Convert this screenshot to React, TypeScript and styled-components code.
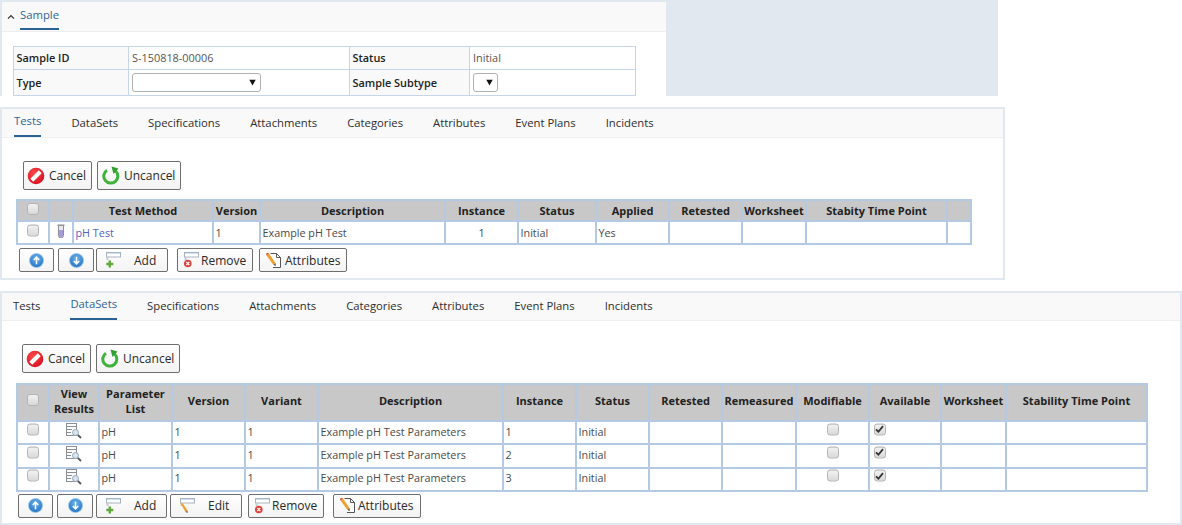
import React from "react";
import styled, { createGlobalStyle } from "styled-components";

const Global = createGlobalStyle`
  html, body { margin: 0; padding: 0; background: #fff; }
  body { font-family: "Open Sans", "Liberation Sans", sans-serif; font-size: 11px; color: #444; }
  * { box-sizing: border-box; }
`;

const Page = styled.div`
  width: 1182px;
  height: 525px;
  overflow: hidden;
  display: flex;
  flex-direction: column;
`;

const TopBand = styled.div`
  width: 998px;
  height: 96px;
  background: #e2e8f0;
  padding: 2px 0 0 2px;
  flex: none;
`;

const SamplePanel = styled.section`
  width: 664px;
  height: 94px;
  background: #fff;
  overflow: hidden;
`;

const TabBar = styled.div<{ $h: number; $pad: number }>`
  height: ${(p) => p.$h}px;
  padding-left: ${(p) => p.$pad}px;
  background: #f9f9f9;
  border-bottom: 1px solid #eeeeee;
  display: flex;
  gap: 30px;
`;

const Tab = styled.div<{ $active?: boolean; $top: number }>`
  height: 100%;
  padding-top: ${(p) => (p.$active ? p.$top - 2 : p.$top)}px;
  line-height: 15px;
  font-size: 11.3px;
  white-space: nowrap;
  color: ${(p) => (p.$active ? "#2f6496" : "#2e2e2e")};
  border-bottom: ${(p) => (p.$active ? "2px solid #2a6294" : "none")};
`;

const SampleHead = styled.div`
  display: flex;
  align-items: flex-start;
  height: 30px;
  gap: 5px;
  padding-left: 5px;
  background: #f9f9f9;
  border-bottom: 1px solid #eeeeee;
`;

const Chevron = styled.svg`
  width: 8px;
  height: 6px;
  margin-top: 12px;
  flex: none;
`;

const SampleTab = styled.div`
  height: 28px;
  padding-top: 5px;
  line-height: 15px;
  color: #2f6496;
  font-size: 11.3px;
  border-bottom: 2px solid #2a6294;
`;

const FormTable = styled.table`
  border-collapse: collapse;
  table-layout: fixed;
  width: 622px;
  margin: 13.5px 0 0 10.5px;
`;

const FormRow = styled.tr<{ $h: number }>`
  height: ${(p) => p.$h}px;
`;

const FormLabel = styled.td`
  border: 1px solid #c6d6e8;
  background: #f9f9f9;
  padding: 0 3px;
  font-weight: 600;
  color: #222;
  font-size: 10.9px;
`;

const FormValue = styled.td`
  border: 1px solid #c6d6e8;
  padding: 0 3px 0 3.5px;
  color: #555;
  font-size: 10.9px;
`;

const FakeSelect = styled.div<{ $w: number }>`
  width: ${(p) => p.$w}px;
  height: 19px;
  margin-left: -0.5px;
  border: 1px solid #b0b0b0;
  border-radius: 3px;
  background: #fff;
  display: flex;
  align-items: center;
  justify-content: flex-end;
  padding-right: 4px;
`;

const Spacer = styled.div<{ $h: number }>`
  height: ${(p) => p.$h}px;
  flex: none;
`;

const Panel = styled.section<{ $w: number; $h: number }>`
  width: ${(p) => p.$w}px;
  height: ${(p) => p.$h}px;
  border: 2px solid #e2e8f0;
  flex: none;
  overflow: hidden;
`;

const TopButtons = styled.div<{ $left: number; $top: number }>`
  display: flex;
  gap: 5px;
  padding: ${(p) => p.$top}px 0 0 ${(p) => p.$left}px;
`;

const Btn = styled.div<{ $w: number; $gap?: number; $left?: number; $mr?: number; $center?: boolean }>`
  width: ${(p) => p.$w}px;
  height: 24px;
  margin-right: ${(p) => p.$mr ?? 0}px;
  flex: none;
  border: 1px solid #6e6e6e;
  border-radius: 2px;
  background: linear-gradient(#ffffff, #f3f3f3);
  display: flex;
  align-items: center;
  justify-content: ${(p) => (p.$center ? "center" : "flex-start")};
  gap: ${(p) => p.$gap ?? 3}px;
  padding-left: ${(p) => (p.$center ? 0 : p.$left ?? 3)}px;
  font-size: 12px;
  color: #2a2a2a;
  white-space: nowrap;
`;

const BigBtn = styled(Btn)`
  height: 29px;
`;

const GridTable = styled.table<{ $w: number; $left: number; $top: number }>`
  border-collapse: collapse;
  table-layout: fixed;
  width: ${(p) => p.$w}px;
  margin: ${(p) => p.$top}px 0 0 ${(p) => p.$left}px;
`;

const Col = styled.col<{ $w: number }>`
  width: ${(p) => p.$w}px;
`;

const HeadRow = styled.tr<{ $h: number }>`
  height: ${(p) => p.$h}px;
`;

const Row = styled.tr<{ $h: number }>`
  height: ${(p) => p.$h}px;
`;

const Th = styled.th<{ $lift?: number }>`
  border: 2px solid #b3c9e4;
  background: #c8c8c8;
  color: #222;
  font-size: 11px;
  line-height: 15px;
  font-weight: 700;
  padding: 0 0 ${(p) => p.$lift ?? 0}px;
  text-align: center;
`;

const Td = styled.td<{ $align?: string; $link?: boolean; $pad?: number; $lift?: number }>`
  border: 2px solid #b3c9e4;
  background: #fff;
  padding: 0 1px ${(p) => p.$lift ?? 0}px ${(p) => p.$pad ?? 1.5}px;
  font-size: 10.8px;
  line-height: 14px;
  text-align: ${(p) => p.$align ?? "left"};
  color: ${(p) => (p.$link ? "#5a5fc4" : "#4a4a4a")};
  white-space: nowrap;
  overflow: hidden;
`;

const CheckBox = styled.span<{ $raise: number }>`
  display: flex;
  align-items: center;
  justify-content: center;
  width: 12px;
  height: 12px;
  margin: 0 auto;
  transform: translateY(-${(p) => p.$raise}px);
  border: 1px solid #b4b4b4;
  border-radius: 3px;
  background: linear-gradient(#f2f2f2, #d8d8d8);
`;

const LeftCheck = styled(CheckBox)`
  margin: 0;
`;

const BottomButtons = styled.div<{ $left: number; $top: number }>`
  display: flex;
  gap: 4px;
  padding: ${(p) => p.$top}px 0 0 ${(p) => p.$left}px;
`;

const CellIcon = styled.svg`
  display: block;
  margin: 0 auto;
  transform: translateY(-2px);
`;

const BtnIcon = styled.svg`
  flex: none;
  display: block;
`;

const CancelIcon = () => (
  <BtnIcon width="18" height="18" viewBox="0 0 18 18">
    <defs>
      <radialGradient id="rg" cx="40%" cy="35%" r="75%">
        <stop offset="0" stopColor="#ff4a4a" />
        <stop offset="1" stopColor="#d20c1c" />
      </radialGradient>
    </defs>
    <circle cx="9" cy="9" r="8.3" fill="url(#rg)" />
    <rect x="3" y="7" width="12" height="4" fill="#fff" transform="rotate(-45 9 9)" />
  </BtnIcon>
);

const UncancelIcon = () => (
  <BtnIcon width="18" height="19" viewBox="0 0 18 19">
    <path d="M5 4.2 A7 7 0 1 0 13.6 5" fill="none" stroke="#3fb23a" strokeWidth="3" />
    <path d="M9.5 0.5 L16.5 2.5 L11.5 8 Z" fill="#2f9e2f" />
  </BtnIcon>
);

const ArrowIcon = ({ down }: { down?: boolean }) => (
  <BtnIcon width="15" height="15" viewBox="0 0 15 15">
    <defs>
      <radialGradient id="bg" cx="50%" cy="35%" r="70%">
        <stop offset="0" stopColor="#6db4ee" />
        <stop offset="1" stopColor="#1e6fc0" />
      </radialGradient>
    </defs>
    <circle cx="7.5" cy="7.5" r="7" fill="url(#bg)" stroke="#9cc6ea" strokeWidth="0.8" />
    <path
      d={down ? "M7.5 3.8V10.6M4.8 8L7.5 10.8L10.2 8" : "M7.5 11.2V4.4M4.8 7L7.5 4.2L10.2 7"}
      fill="none"
      stroke="#fff"
      strokeWidth="1.5"
    />
  </BtnIcon>
);

const ListBase = () => (
  <>
    <rect x="1.5" y="0.5" width="14" height="4.5" fill="#fff" stroke="#a8b4c0" />
    <rect x="2" y="1" width="13" height="1" fill="#cfe0f2" />
    <rect x="1.5" y="5" width="2" height="3" fill="#c4ccd4" />
  </>
);

const AddIcon = () => (
  <BtnIcon width="17" height="16" viewBox="0 0 17 16">
    <ListBase />
    <path d="M3.6 8.5h2.4v2.3h2.3v2.4H6v2.3H3.6v-2.3H1.3v-2.4h2.3z" fill="#5fa83c" />
  </BtnIcon>
);

const EditIcon = () => (
  <BtnIcon width="17" height="16" viewBox="0 0 17 16">
    <ListBase />
    <path d="M1.5 5.5L3.5 5L8.5 12.5L6.5 14Z" fill="#f0a030" />
    <path d="M6.5 14L8.5 12.5L8.8 15Z" fill="#7a5a30" />
  </BtnIcon>
);

const RemoveIcon = () => (
  <BtnIcon width="17" height="16" viewBox="0 0 17 16">
    <ListBase />
    <circle cx="4.8" cy="11.5" r="3.8" fill="#d9443c" />
    <path d="M3.3 10L6.3 13M6.3 10L3.3 13" stroke="#fff" strokeWidth="1.1" />
  </BtnIcon>
);

const AttrIcon = () => (
  <BtnIcon width="17" height="17" viewBox="0 0 17 17">
    <path d="M5.5 1.5H11.5L15.5 5.5V15.5H8" fill="#fff" stroke="#555" />
    <path d="M11.5 1.5V5.5H15.5" fill="none" stroke="#555" />
    <path d="M1.5 3.5L4 1.5L10.5 11L8.5 13Z" fill="#f0a030" />
    <path d="M1.5 3.5L4 1.5L2.8 0.8L1 1.8Z" fill="#d94a3a" />
    <path d="M8.5 13L10.5 11L10.8 14Z" fill="#5a4a30" />
  </BtnIcon>
);

const TubeIcon = () => (
  <CellIcon width="8" height="14" viewBox="0 0 8 14">
    <rect x="0.5" y="0.5" width="7" height="1.4" fill="#8a8a8a" />
    <path d="M1.5 2V11.5A2.5 2.5 0 0 0 6.5 11.5V2" fill="#e8e8ee" stroke="#8f8f98" />
    <path d="M2 6H6V11.5A2 2 0 0 1 2 11.5Z" fill="#a79ad8" />
  </CellIcon>
);

const ResultsIcon = () => (
  <CellIcon width="16" height="16" viewBox="0 0 16 16">
    <rect x="0.5" y="0.5" width="10" height="12" fill="#fff" stroke="#8a8f96" />
    <path d="M0.5 3.5H10.5M0.5 6.5H6M0.5 9.5H5" stroke="#8a8f96" />
    <circle cx="9.5" cy="9.5" r="3" fill="#d4e6f6" stroke="#9aa6b2" />
    <path d="M11.8 11.8L15 15" stroke="#555" strokeWidth="1.8" />
  </CellIcon>
);

const Check = ({ raise }: { raise: number }) => <CheckBox $raise={raise} />;

const OnCheck = ({ raise }: { raise: number }) => (
  <LeftCheck $raise={raise}>
    <svg width="9" height="9" viewBox="0 0 9 9">
      <path d="M1 4.8L3.4 7.2L8 1.6" fill="none" stroke="#333" strokeWidth="1.8" />
    </svg>
  </LeftCheck>
);

const Triangle = () => (
  <svg width="7" height="7" viewBox="0 0 7 7">
    <path d="M0.3 0.8H6.7L3.5 6.5Z" fill="#111" />
  </svg>
);

const tabs = ["Tests", "DataSets", "Specifications", "Attachments", "Categories", "Attributes", "Event Plans", "Incidents"];

const Tabs = ({ active, pad, h, top }: { active: string; pad: number; h: number; top: number }) => (
  <TabBar $h={h} $pad={pad}>
    {tabs.map((t) => (
      <Tab key={t} $active={t === active} $top={top}>
        {t}
      </Tab>
    ))}
  </TabBar>
);

const Actions = ({ left, top }: { left: number; top: number }) => (
  <TopButtons $left={left} $top={top}>
    <BigBtn $w={69} $left={3} $gap={4}>
      <CancelIcon />
      Cancel
    </BigBtn>
    <BigBtn $w={84} $left={4} $gap={4}>
      <UncancelIcon />
      Uncancel
    </BigBtn>
  </TopButtons>
);

const testCols = [32, 24, 140, 47, 185, 73, 78, 73, 73, 64, 141, 24];
const testHead = ["", "", "Test Method", "Version", "Description", "Instance", "Status", "Applied", "Retested", "Worksheet", "Stabity Time Point", ""];

const dataCols = [32, 50, 73, 73, 73, 185, 73, 73, 73, 74, 73, 72, 65, 141];
const dataHead = ["", "View Results", "Parameter List", "Version", "Variant", "Description", "Instance", "Status", "Retested", "Remeasured", "Modifiable", "Available", "Worksheet", "Stability Time Point"];

export default function App() {
  return (
    <Page>
      <Global />
      <TopBand>
        <SamplePanel>
          <SampleHead>
            <Chevron viewBox="0 0 8 6">
              <path d="M1 4.6L4 1.6L7 4.6" fill="none" stroke="#333" strokeWidth="1.3" />
            </Chevron>
            <SampleTab>Sample</SampleTab>
          </SampleHead>
          <FormTable>
            <colgroup>
              <Col $w={115} />
              <Col $w={221} />
              <Col $w={120} />
              <Col $w={166} />
            </colgroup>
            <tbody>
              <FormRow $h={23}>
                <FormLabel>Sample ID</FormLabel>
                <FormValue>S-150818-00006</FormValue>
                <FormLabel>Status</FormLabel>
                <FormValue>Initial</FormValue>
              </FormRow>
              <FormRow $h={26}>
                <FormLabel>Type</FormLabel>
                <FormValue>
                  <FakeSelect $w={129}>
                    <Triangle />
                  </FakeSelect>
                </FormValue>
                <FormLabel>Sample Subtype</FormLabel>
                <FormValue>
                  <FakeSelect $w={25}>
                    <Triangle />
                  </FakeSelect>
                </FormValue>
              </FormRow>
            </tbody>
          </FormTable>
        </SamplePanel>
      </TopBand>

      <Spacer $h={11} />

      <Panel $w={1005} $h={173}>
        <Tabs active="Tests" pad={12} h={29} top={6} />
        <Actions left={21} top={23} />
        <GridTable $w={954} $left={14} $top={9}>
          <colgroup>
            {testCols.map((w, i) => (
              <Col key={i} $w={w} />
            ))}
          </colgroup>
          <thead>
            <HeadRow $h={21}>
              {testHead.map((h, i) => (
                <Th key={i}>{i === 0 ? <Check raise={2} /> : h}</Th>
              ))}
            </HeadRow>
          </thead>
          <tbody>
            <Row $h={23}>
              <Td $pad={1}>
                <Check raise={2.5} />
              </Td>
              <Td $pad={1}>
                <TubeIcon />
              </Td>
              <Td $link>pH Test</Td>
              <Td>1</Td>
              <Td>Example pH Test</Td>
              <Td $align="center" $pad={1}>1</Td>
              <Td>Initial</Td>
              <Td>Yes</Td>
              <Td />
              <Td />
              <Td />
              <Td />
            </Row>
          </tbody>
        </GridTable>
        <BottomButtons $left={17} $top={3}>
          <Btn $w={35} $center>
            <ArrowIcon />
          </Btn>
          <Btn $w={36} $center $mr={-2}>
            <ArrowIcon down />
          </Btn>
          <Btn $w={72} $left={8} $gap={12} $mr={5}>
            <AddIcon />
            Add
          </Btn>
          <Btn $w={76} $left={5} $gap={1} $mr={2}>
            <RemoveIcon />
            Remove
          </Btn>
          <Btn $w={88} $left={5} $gap={3}>
            <AttrIcon />
            Attributes
          </Btn>
        </BottomButtons>
      </Panel>

      <Spacer $h={11} />

      <Panel $w={1182} $h={234}>
        <Tabs active="DataSets" pad={11} h={28} top={5} />
        <Actions left={20} top={23} />
        <GridTable $w={1130} $left={14} $top={10}>
          <colgroup>
            {dataCols.map((w, i) => (
              <Col key={i} $w={w} />
            ))}
          </colgroup>
          <thead>
            <HeadRow $h={37}>
              {dataHead.map((h, i) => (
                <Th key={i} $lift={i === 0 ? 0 : 4}>{i === 0 ? <Check raise={3} /> : h}</Th>
              ))}
            </HeadRow>
          </thead>
          <tbody>
            {[1, 2, 3].map((n) => (
              <Row key={n} $h={23.33}>
                <Td $pad={1}>
                  <Check raise={3.5} />
                </Td>
                <Td $pad={1}>
                  <ResultsIcon />
                </Td>
                <Td $lift={2}>pH</Td>
                <Td $lift={2}>1</Td>
                <Td $lift={2}>1</Td>
                <Td $lift={2}>Example pH Test Parameters</Td>
                <Td $lift={2}>{n}</Td>
                <Td $lift={2}>Initial</Td>
                <Td />
                <Td />
                <Td $pad={1}>
                  <Check raise={3.5} />
                </Td>
                <Td $pad={3.5}>
                  <OnCheck raise={3.5} />
                </Td>
                <Td />
                <Td />
              </Row>
            ))}
          </tbody>
        </GridTable>
        <BottomButtons $left={16} $top={2}>
          <Btn $w={35} $center>
            <ArrowIcon />
          </Btn>
          <Btn $w={36} $center $mr={-1}>
            <ArrowIcon down />
          </Btn>
          <Btn $w={71} $left={8} $gap={12} $mr={-1}>
            <AddIcon />
            Add
          </Btn>
          <Btn $w={72} $left={8} $gap={12} $mr={2}>
            <EditIcon />
            Edit
          </Btn>
          <Btn $w={76} $left={5} $gap={1} $mr={5}>
            <RemoveIcon />
            Remove
          </Btn>
          <Btn $w={88} $left={5} $gap={2}>
            <AttrIcon />
            Attributes
          </Btn>
        </BottomButtons>
      </Panel>
    </Page>
  );
}
